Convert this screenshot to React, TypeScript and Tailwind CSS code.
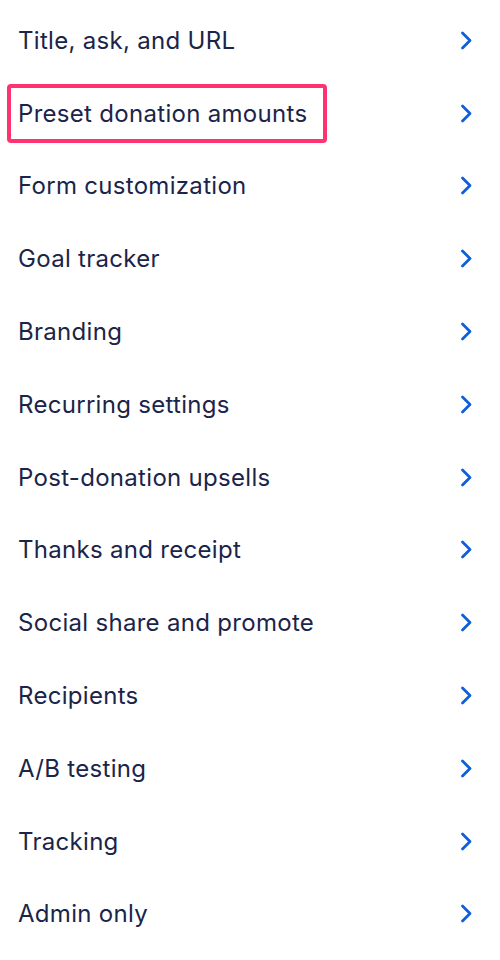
import React from 'react';

const ITEMS = [
  'Title, ask, and URL',
  'Preset donation amounts',
  'Form customization',
  'Goal tracker',
  'Branding',
  'Recurring settings',
  'Post-donation upsells',
  'Thanks and receipt',
  'Social share and promote',
  'Recipients',
  'A/B testing',
  'Tracking',
  'Admin only',
];

const Chevron = () => (
  <svg width="13" height="19" viewBox="0 0 13 19" fill="none">
    <path d="M2.5 2L10 9.5L2.5 17" stroke="#0d5fdb" strokeWidth="2.8" strokeLinecap="round" strokeLinejoin="round" />
  </svg>
);

const App = () => {
  return (
    <div className="w-[500px] h-[960px] bg-white pt-[4px] font-['Inter',sans-serif] text-[#1b2449]">
      {ITEMS.map((label, i) => (
        <div key={label} className="h-[72.8px] flex items-center justify-between pl-[18px] pr-[27px]">
          {i === 1 ? (
            <span className="-ml-[11px] border-4 border-[#ff3370] rounded-[4px] pl-[7px] pr-[16px] py-[11px] text-[24px] leading-[29px] tracking-[0.3px]">
              {label}
            </span>
          ) : (
            <span className="text-[24px] leading-[29px] tracking-[0.3px]">{label}</span>
          )}
          <Chevron />
        </div>
      ))}
    </div>
  );
};

export default App;
